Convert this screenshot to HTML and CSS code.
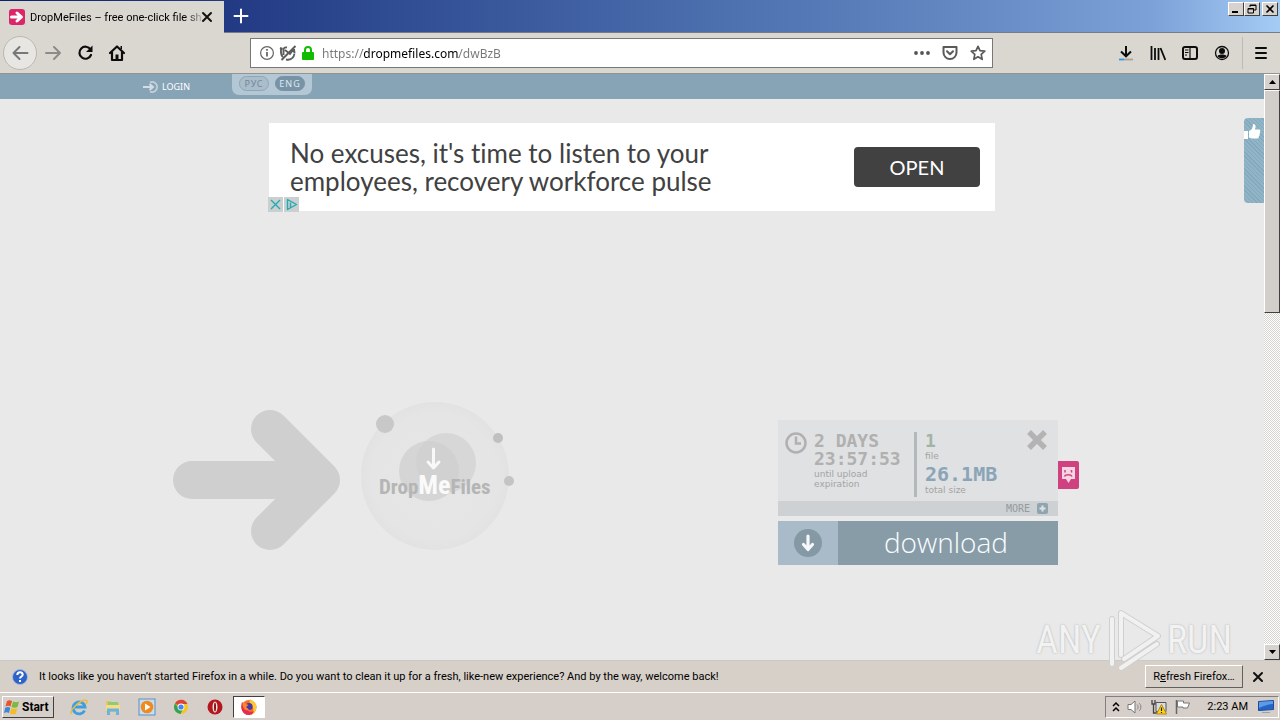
FILE: index.html
```html
<!DOCTYPE html>
<html lang="en">
<head>
<meta charset="utf-8">
<title>DropMeFiles – free one-click file sharing</title>
<link rel="stylesheet" href="styles.css">
</head>
<body>
<div class="screen">
  <header class="titlebar">
    <div class="tab">
      <svg class="favicon" width="16" height="16" viewBox="0 0 16 16"><rect width="16" height="16" rx="3" fill="#dc2468"/><path d="M2.500 8h9M8 4l4.500 4L8 12" fill="none" stroke="#fff" stroke-width="3" stroke-linecap="round" stroke-linejoin="round"/></svg>
      <span class="tab-title">DropMeFiles – free one-click file sh</span>
      <button class="icon-btn tab-close" aria-label="Close tab"><svg width="12" height="12" viewBox="0 0 12 12"><path d="M2 2l8 8M10 2l-8 8" stroke="#111" stroke-width="2" stroke-linecap="round"/></svg></button>
    </div>
    <button class="icon-btn new-tab" aria-label="New tab"><svg width="16" height="16" viewBox="0 0 16 16"><path d="M8 1.500v13M1.500 8h13" stroke="#fff" stroke-width="2" stroke-linecap="round"/></svg></button>
    <div class="window-controls">
      <button class="win-btn" aria-label="Minimize"><svg width="12" height="10" viewBox="0 0 12 10"><path d="M2 8h6" stroke="#000" stroke-width="2"/></svg></button>
      <button class="win-btn" aria-label="Restore"><svg width="12" height="10" viewBox="0 0 12 10"><path d="M4 3V1h6v5H8M4 1.500h6" fill="none" stroke="#000"/><path d="M2 4.500h5.500V9H2zM2 5h6" fill="none" stroke="#000"/></svg></button>
      <button class="win-btn win-close" aria-label="Close"><svg width="12" height="10" viewBox="0 0 12 10"><path d="M2.500 1.500l7 7M9.500 1.500l-7 7" stroke="#000" stroke-width="1.600"/></svg></button>
    </div>
  </header>

  <nav class="toolbar">
    <div class="nav-buttons">
      <button class="icon-btn back" aria-label="Back"><svg width="18" height="18" viewBox="0 0 18 18"><path d="M16.500 9H2.500M8.500 3L2.500 9l6 6" fill="none" stroke="#777" stroke-width="2" stroke-linecap="round" stroke-linejoin="round"/></svg></button>
      <button class="icon-btn" aria-label="Forward"><svg width="18" height="18" viewBox="0 0 18 18"><path d="M2 9h14M10 3l6 6-6 6" fill="none" stroke="#8d8b87" stroke-width="2" stroke-linecap="round" stroke-linejoin="round"/></svg></button>
      <button class="icon-btn" aria-label="Reload"><svg width="18" height="18" viewBox="0 0 18 18"><path d="M14.500 5.500A6 6 0 1 0 15 11" fill="none" stroke="#0c0c0d" stroke-width="2.200" stroke-linecap="round"/><path d="M16.500 1.500v6.500h-6.500z" fill="#0c0c0d"/></svg></button>
      <button class="icon-btn" aria-label="Home"><svg width="18" height="18" viewBox="0 0 18 18"><path d="M2 9l7-6.500L16 9M4 8v8h10V8" fill="none" stroke="#0c0c0d" stroke-width="2.200" stroke-linejoin="round" stroke-linecap="round"/><path d="M7.500 10.500h3V16h-3z" fill="#0c0c0d"/><path d="M12.500 2h1.500v3h-1.500z" fill="#0c0c0d"/></svg></button>
    </div>
    <div class="urlbar">
      <svg width="16" height="16" viewBox="0 0 16 16"><circle cx="8" cy="8" r="6.400" fill="none" stroke="#666" stroke-width="1.200"/><path d="M8 7v4.500M8 4v1.700" stroke="#555" stroke-width="1.600"/></svg>
      <svg width="18" height="16" viewBox="0 0 18 16"><path d="M2 4v4a6 6 0 0 0 2 4M7 14.500c5 1 8-2 8.500-6M15 4l.5 4M1 3l2.500 1M8 2.500C6 2 4.500 3 4.500 5v5M6 5l5 4 3-4" fill="none" stroke="#5c5c5c" stroke-width="1.900"/><path d="M16.500 1L2.500 15" stroke="#5c5c5c" stroke-width="1.900"/></svg>
      <svg width="14" height="16" viewBox="0 0 14 16"><path d="M4 8V5a3 3 0 0 1 6 0v3" fill="none" stroke="#12bc00" stroke-width="2"/><rect x="1" y="7" width="12" height="8" rx="1" fill="#12bc00"/></svg>
      <input class="url-input" type="text" aria-label="Address" value="https://dropmefiles.com/dwBzB">
      <button class="icon-btn" aria-label="Page actions"><svg width="16" height="16" viewBox="0 0 16 16"><g fill="#555"><circle cx="2" cy="8" r="1.900"/><circle cx="8" cy="8" r="1.900"/><circle cx="14" cy="8" r="1.900"/></g></svg></button>
      <button class="icon-btn" aria-label="Save to Pocket"><svg width="16" height="16" viewBox="0 0 16 16"><path d="M1.500 2h13v5.500a6.500 6.500 0 0 1-13 0zM5 6.200l3 3 3-3" fill="none" stroke="#5a5a5a" stroke-width="2" stroke-linejoin="round" stroke-linecap="round"/></svg></button>
      <button class="icon-btn" aria-label="Bookmark"><svg width="16" height="16" viewBox="0 0 16 16"><path d="M8 1.300l2 4.400 4.800.5-3.600 3.200 1 4.900L8 11.800l-4.200 2.500 1-4.900L1.200 6.200 6 5.700z" fill="none" stroke="#5a5a5a" stroke-width="1.700" stroke-linejoin="round"/></svg></button>
    </div>
    <div class="tool-buttons">
      <button class="icon-btn" aria-label="Downloads"><svg width="16" height="16" viewBox="0 0 16 16"><path d="M8 1v10M3 6.500L8 11.300l5-4.800" fill="none" stroke="#0c0c0d" stroke-width="2"/><path d="M1 14.500h5" stroke="#2b9be8" stroke-width="1.800"/><path d="M6 14.500h9" stroke="#a9a39c" stroke-width="1.800"/></svg></button>
      <button class="icon-btn" aria-label="Library"><svg width="16" height="16" viewBox="0 0 16 16"><path d="M1.500 1v14M5 3v12M8.500 3v12M10.500 3l4.800 12" stroke="#0c0c0d" stroke-width="1.800"/></svg></button>
      <button class="icon-btn" aria-label="Sidebars"><svg width="16" height="16" viewBox="0 0 16 16"><rect x="1" y="2" width="14" height="12" rx="2" fill="none" stroke="#0c0c0d" stroke-width="2"/><path d="M8 2v12M3 5h3.500M3 7.500h3.500M3 10h2" stroke="#0c0c0d" stroke-width="1.200"/></svg></button>
      <button class="icon-btn" aria-label="Account"><svg width="16" height="16" viewBox="0 0 16 16"><circle cx="8" cy="8" r="6.500" fill="none" stroke="#0c0c0d" stroke-width="1.300"/><circle cx="8" cy="6" r="3" fill="#0c0c0d"/><path d="M3.500 11c1-2 8-2 9 0-1.500 3-7.500 3-9 0z" fill="#0c0c0d"/></svg></button>
      <button class="icon-btn menu" aria-label="Menu"><svg width="16" height="16" viewBox="0 0 16 16"><path d="M3 3h10M3 8h10M3 13h10" stroke="#0c0c0d" stroke-width="2" stroke-linecap="round"/></svg></button>
    </div>
  </nav>

  <div class="viewport">
    <main class="page">
      <div class="site-header">
        <div class="site-header-inner">
          <a class="login" href="#"><svg width="17" height="12" viewBox="0 0 17 12"><path d="M1 6h9M7.500 3l3.500 3-3.500 3" fill="none" stroke="#d3dde4" stroke-width="2"/><path d="M8 1.500a5 5 0 1 1 0 9" fill="none" stroke="#c3d1da" stroke-width="1.800"/></svg>LOGIN</a>
          <div class="langs"><button class="lang">РУС</button><button class="lang active">ENG</button></div>
        </div>
      </div>
      <section class="ad">
        <p class="ad-text">No excuses, it's time to listen to your<br>employees, recovery workforce pulse</p>
        <button class="ad-open">OPEN</button>
        <div class="ad-marks">
          <button class="ad-mark" aria-label="Close ad"><svg width="15" height="15" viewBox="0 0 15 15"><path d="M3 3l9 9M12 3l-9 9" stroke="#22acb4" stroke-width="1.400"/></svg></button>
          <button class="ad-mark" aria-label="AdChoices"><svg width="15" height="15" viewBox="0 0 15 15"><path d="M3.500 2.500v10L12.500 7.500z M6.500 5.500v5" fill="none" stroke="#22acb4" stroke-width="1.400" stroke-linejoin="round"/></svg></button>
        </div>
      </section>
      <section class="hero">
        <div class="brand">
          <svg width="168" height="140" viewBox="0 0 168 140"><path d="M19 70h125M97 19l51 51-51 51" fill="none" stroke="#cfcfcf" stroke-width="38" stroke-linecap="round" stroke-linejoin="round"/></svg>
          <div class="orb">
            <svg width="154" height="148" viewBox="0 0 154 148">
              <defs><radialGradient id="orb"><stop offset="0" stop-color="#e6e6e6"/><stop offset=".85" stop-color="#e5e5e5"/><stop offset="1" stop-color="#e2e2e2"/></radialGradient></defs>
              <circle cx="75" cy="74" r="74" fill="url(#orb)"/>
              <circle cx="86" cy="61" r="30" fill="#d7d7d7"/>
              <circle cx="69" cy="69" r="30" fill="#cfcfcf" fill-opacity=".72"/>
              <circle cx="25" cy="22" r="9" fill="#c8c8c8"/><circle cx="138" cy="36" r="5" fill="#c0c0c0"/><circle cx="149" cy="79" r="5" fill="#c4c4c4"/>
              <path d="M73.500 47v18M68 60l5.500 6 5.500-6" fill="none" stroke="#f8f8f8" stroke-width="3" stroke-linecap="round" stroke-linejoin="round"/>
            </svg>
            <div class="wordmark">Drop<span class="me">Me</span>Files</div>
          </div>
        </div>
        <div class="download-box">
          <div class="card">
            <div class="info">
              <svg class="clock" width="22" height="22" viewBox="0 0 22 22"><circle cx="11" cy="11" r="9.500" fill="none" stroke="#b0b0b0" stroke-width="2.500"/><path d="M11 4.500v7h5" fill="none" stroke="#b0b0b0" stroke-width="2.500"/></svg>
              <div class="expiry"><div class="digits">2 DAYS</div><div class="digits">23:57:53</div><div class="caption">until upload<br>expiration</div></div>
              <div class="totals"><div class="digits green">1</div><div class="caption">file</div><div class="digits blue">26.1MB</div><div class="caption">total size</div></div>
              <button class="icon-btn dismiss" aria-label="Close"><svg width="22" height="22" viewBox="0 0 22 22"><path d="M3 3l16 16M19 3L3 19" stroke="#b3b3b3" stroke-width="5.500"/></svg></button>
            </div>
            <button class="more">MORE <svg width="11" height="11" viewBox="0 0 11 11"><rect width="11" height="11" rx="2" fill="#90a4b0"/><path d="M5.500 2.500v6M2.500 5.500h6" stroke="#dce3e7" stroke-width="2"/></svg></button>
            <button class="report" aria-label="Report file"><svg width="21" height="28" viewBox="0 0 21 28"><path d="M4 6h13v12h-4l-2.500 4L8 18H4z" fill="#f6d6e4"/><path d="M7 9v2.500M13.500 9v2.500M6.500 15.500c1-2.500 6.500-2.500 7.500 0" fill="none" stroke="#d0427f" stroke-width="1.500"/></svg></button>
          </div>
          <button class="download"><span class="download-icon"><svg width="28" height="28" viewBox="0 0 28 28"><circle cx="14" cy="14" r="14" fill="#8499a4"/><path d="M14 7v13M9.500 15.500L14 20.500l4.500-5" fill="none" stroke="#f4f8fa" stroke-width="3.200" stroke-linecap="round" stroke-linejoin="round"/></svg></span><span class="download-label">download</span></button>
        </div>
      </section>
      <button class="like" aria-label="Like"><svg width="18" height="17" viewBox="0 0 18 17"><path d="M0 8h4v8H0zM5 8c3-1 4-4 4-7 3 0 3 3 2 5.500h4.500c1 0 1.200 2 .2 2.300.8.600.5 2-.3 2.200.6.700.2 2-.6 2.200.3 1-.3 2.300-1.300 2.300H8l-3-1z" fill="#fff"/></svg></button>
    </main>
    <div class="scrollbar">
      <button class="win-btn scroll-arrow" aria-label="Scroll up"><svg width="7" height="4" viewBox="0 0 7 4"><path d="M0 4L3.500 0 7 4z"/></svg></button>
      <div class="thumb"></div>
      <div class="track"></div>
      <button class="win-btn scroll-arrow" aria-label="Scroll down"><svg width="7" height="4" viewBox="0 0 7 4"><path d="M0 0l3.500 4L7 0z"/></svg></button>
    </div>
    <div class="watermark"><span>ANY</span><svg width="60" height="66" viewBox="0 0 60 66"><path d="M17 48V6L54 29 20 52M8 57V12M17 61L53 37" fill="none" stroke="#d0d0d0" stroke-width="6" stroke-linejoin="round" stroke-linecap="round"/><path d="M17 48V6L54 29 20 52M8 57V12M17 61L53 37" fill="none" stroke="#f1f1f1" stroke-width="4" stroke-linejoin="round" stroke-linecap="round"/></svg><span>RUN</span></div>
  </div>

  <div class="notice">
    <svg width="16" height="16" viewBox="0 0 16 16"><circle cx="8" cy="8" r="7.500" fill="#2d62c9" stroke="#a4b7dd"/><path d="M5.300 6c0-3.500 5.600-3.500 5.400-.3C10.700 7.500 8 7.500 8 9.500M8 11v2" fill="none" stroke="#fff" stroke-width="2"/></svg>
    <span class="notice-text">It looks like you haven’t started Firefox in a while. Do you want to clean it up for a fresh, like-new experience? And by the way, welcome back!</span>
    <button class="refresh">R<u>e</u>fresh Firefox…</button>
    <button class="icon-btn" aria-label="Dismiss"><svg width="12" height="12" viewBox="0 0 12 12"><path d="M2 2l8 8M10 2l-8 8" stroke="#111" stroke-width="2" stroke-linecap="round"/></svg></button>
  </div>

  <footer class="taskbar">
    <button class="start"><svg width="16" height="16" viewBox="0 0 16 16"><path d="M3 2c2-1 3-1 5 0L6.500 7.500C5 6.500 3.500 6.500 1.500 7.500z" fill="#e6562a"/><path d="M9 2.500c2 1 4 1 6 0L13.500 8c-2 1-4 1-6 0z" fill="#7cb93c"/><path d="M1.200 8.700c2-1 3.500-1 5 0L5 14c-1.500-1-3-1-5 0z" fill="#3c87d8"/><path d="M7.200 9.200c2 1 4 1 6 0L12 14.500c-2 1-4 1-6.200 0z" fill="#f6bd22"/></svg>Start</button>
    <div class="launchers">
      <button class="launcher" aria-label="Internet Explorer"><svg width="18" height="18" viewBox="0 0 18 18"><path d="M14.500 12.500A6 6 0 1 1 15 9H5" fill="none" stroke="#3b9fe0" stroke-width="2.800"/><path d="M1.500 16C-1 12 11 1 16.500 2.500c1 .500.500 2-.5 3.500" fill="none" stroke="#e9bb3c" stroke-width="1.500"/></svg></button>
      <button class="launcher" aria-label="Explorer"><svg width="18" height="18" viewBox="0 0 18 18"><path d="M2 3h5l1 2h7v9H2z" fill="#e6c55d"/><path d="M4 4h10v6H4z" fill="#8fcb74"/><path d="M2 7h14v6H2z" fill="#f5dc86"/><path d="M3 17v-6.500h12V17h-3v-3.500H6V17z" fill="#6db3e2"/></svg></button>
      <button class="launcher" aria-label="Media Player"><svg width="18" height="18" viewBox="0 0 18 18"><rect x="1" y="1" width="16" height="16" fill="#c6ddf0" stroke="#5a8fc4"/><circle cx="9" cy="9" r="6.300" fill="#f08a1d"/><path d="M7 5.500v7L12.500 9z" fill="#fff"/></svg></button>
      <button class="launcher" aria-label="Chrome"><svg width="18" height="18" viewBox="0 0 18 18"><circle cx="9" cy="9" r="7" fill="#f5c52c"/><path d="M9 9L3 5.400A7 7 0 0 1 15.500 6H9z" fill="#dc4437"/><path d="M3 5.400A7 7 0 0 0 8.500 16L11 11 7 10z" fill="#32a457"/><circle cx="9" cy="9" r="3.400" fill="#fff"/><circle cx="9" cy="9" r="2.600" fill="#4285f4"/></svg></button>
      <button class="launcher" aria-label="Opera"><svg width="18" height="18" viewBox="0 0 18 18"><circle cx="9" cy="9" r="7.500" fill="#b5161d"/><ellipse cx="9" cy="9" rx="2.500" ry="5.500" fill="#f5e4e2"/><ellipse cx="9" cy="9" rx="1" ry="4.500" fill="#8e1015"/></svg></button>
      <button class="launcher pressed" aria-label="Firefox"><svg width="18" height="18" viewBox="0 0 18 18"><circle cx="9" cy="9.500" r="7.500" fill="#f4702a"/><path d="M10 1c4 2 7 5 6.300 9A7.500 7.500 0 0 1 9 17c4-2 6-6 3-9-2-2-3-4-2-7z" fill="#ffca32"/><path d="M2 4c-2 6 0 12 6 13 3 0 5-1 6-4-3 2-8 0-8-4z" fill="#e62a52"/><circle cx="9" cy="8.500" r="3.600" fill="#4b35a8"/><path d="M2.500 4L5 5.500 8.500 7 6 9l3 2.500C5 14 2 9 2.500 4z" fill="#f7892c"/></svg></button>
    </div>
    <div class="tray">
      <svg width="8" height="12" viewBox="0 0 8 12"><path d="M1 5l3-3 3 3M1 10l3-3 3 3" fill="none" stroke="#000" stroke-width="1.500"/></svg>
      <svg width="18" height="16" viewBox="0 0 18 16"><path d="M2 5.500h3L9 2v12l-4-3.500H2z" fill="#fff" stroke="#777"/><path d="M11 5.500c1.500 1.500 1.500 3.500 0 5M13 4c2.500 2 2.500 6 0 8" fill="none" stroke="#888"/></svg>
      <svg width="18" height="16" viewBox="0 0 18 16"><path d="M6 3.500h10v9H6z" fill="#d7dde4" stroke="#555"/><path d="M2 1v4h3V1M3.500 5v9h4" fill="none" stroke="#444" stroke-width="1.300"/><path d="M11.500 5.500L16.500 15h-10z" fill="#ffd21e" stroke="#b58a00"/><path d="M11.500 8.500v3.500M11.500 13v1" stroke="#222" stroke-width="1.200"/></svg>
      <svg width="18" height="16" viewBox="0 0 18 16"><path d="M2.500 1v14" stroke="#666" stroke-width="1.500"/><path d="M3.500 2h6v2h6l-2 5H9V8H3.500z" fill="#fff" stroke="#777"/></svg>
      <time class="time">2:23 AM</time>
      <svg width="16" height="14" viewBox="0 0 16 14"><path d="M.5 1.500l15-1v9l-15 1z" fill="#2464c6" stroke="#1d4c99"/><path d="M1 2l14-1v3c-5 0-9 2-14 4z" fill="#5d9bea"/><path d="M4 12.500h8" stroke="#8fa4bd"/></svg>
    </div>
  </footer>
</div>
</body>
</html>
```
FILE: styles.css
```css
* { box-sizing: border-box; }
body { margin: 0; font-family: Roboto, "Noto Sans", sans-serif; font-size: 11px; color: #000; }
button { font: inherit; color: inherit; border: 0; padding: 0; margin: 0; background: none; }
svg { display: block; flex: none; }
.screen { display: flex; flex-direction: column; height: 100vh; overflow: hidden; background: #d5cec8; }
.icon-btn { display: flex; align-items: center; justify-content: center; }

.titlebar { display: flex; height: 33px; flex: none; background: linear-gradient(90deg, #0a246a 0, #243d86 20%, #4567a8 50%, #5f84be 72%, #7ba1d8 90%, #a4ccf4 100%); border-bottom: 1px solid #777c88; }
.tab { display: flex; align-items: center; gap: 5px; width: 224px; height: 32px; margin-top: 1px; padding: 0 11px 0 9px; background: #dad7d1; }
.tab-title { flex: 1; white-space: nowrap; mask-image: linear-gradient(90deg, #000 90%, transparent 102%); }
.tab-close { margin-left: -6px; }
.new-tab { width: 33px; }
.window-controls { display: flex; align-items: flex-start; margin-left: auto; padding: 2px 2px 0 0; }
.win-btn { display: flex; align-items: center; justify-content: center; width: 16px; height: 14px; background: #d6d3ce; border: 1px solid; border-color: #fff #404040 #404040 #fff; }
.win-close { margin-left: 2px; }

.toolbar { display: flex; align-items: center; height: 41px; flex: none; background: #dad7d1; border-bottom: 1px solid #969490; padding: 0 11px 0 3px; }
.nav-buttons { display: flex; align-items: center; gap: 14px; width: 247px; }
.back { width: 34px; height: 34px; margin-right: -7px; border: 1px solid #bbb8b2; border-radius: 50%; background: #e8e6e2; }
.urlbar { display: flex; align-items: center; gap: 4px; flex: 1; max-width: 743px; height: 30px; padding: 0 6px 0 8px; border: 1px solid #777; background: #fff; }
.urlbar .icon-btn { margin-left: 8px; }
.url-input { flex: 1; min-width: 0; height: 26px; border: 0; padding: 0 0 0 3px; outline: 0; font: 12px "Noto Sans", sans-serif; color: transparent; background: linear-gradient(90deg, #777 44px, #000 44px, #000 140px, #777 140px); background-clip: text; }
.tool-buttons { display: flex; align-items: center; gap: 16px; margin-left: auto; }
.menu { height: 32px; padding-left: 10px; margin-left: -4px; border-left: 1px solid #bdbab5; }

.viewport { position: relative; display: flex; flex: 1; min-height: 0; background: #e9e9e9; }
.page { position: relative; flex: 1; min-width: 0; overflow: hidden; }
.site-header { height: 25px; background: #87a3b6; }
.site-header-inner { display: flex; width: 980px; max-width: 100%; margin: 0 auto; }
.login { display: flex; align-items: center; gap: 3px; width: 90px; height: 25px; color: #fff; font: 9px "Noto Sans", sans-serif; text-decoration: none; }
.langs { display: flex; gap: 6px; height: 21px; padding: 2px 7px 5px; background: #b4c7d4; border-radius: 0 0 7px 7px; }
.lang { display: flex; align-items: center; justify-content: center; width: 30px; height: 15px; border-radius: 8px; border: 1px solid #8fa6b6; background: #a9bdca; color: #70889a; font: 9px "Noto Sans", sans-serif; letter-spacing: 1px; }
.lang.active { background: #7893a6; border-color: #7893a6; color: #dce8ef; }

.ad { position: relative; display: flex; align-items: center; justify-content: space-between; width: 726px; max-width: 100%; height: 88px; margin: 24px auto 0; padding: 0 15px 0 21px; background: #fff; }
.ad-text { margin: 0; font: 26px/28px Lato, sans-serif; font-variant-ligatures: none; color: #414141; }
.ad-open { width: 126px; height: 40px; border-radius: 4px; background: #414141; color: #fff; font: 20px Lato, sans-serif; }
.ad-marks { position: absolute; left: -1px; bottom: -1px; display: flex; gap: 1px; background: #fff; }
.ad-mark { width: 15px; height: 15px; background: #cbcfcf; }

.hero { display: flex; justify-content: space-between; align-items: flex-start; width: 918px; max-width: 100%; margin: 191px auto 0; padding-right: 33px; }
.brand { display: flex; align-items: flex-end; gap: 19px; }
.orb { position: relative; }
.wordmark { position: absolute; left: 19px; top: 67px; font: bold 21px/32px "Roboto Condensed", "Liberation Sans", sans-serif; color: #b5b5b5; white-space: nowrap; }
.me { color: #fafafa; font-size: 26px; }
.download-box { width: 280px; margin-top: 18px; }
.card { position: relative; background: #dfe1e2; }
.info { display: flex; height: 81px; padding: 12px 10px 4px 7px; }
.clock { margin-right: 7px; }
.expiry { width: 100px; color: #b0b0b0; }
.totals { flex: 1; padding-left: 8px; border-left: 3px solid #b3b8bb; }
.digits { font: bold 18px/18px "DejaVu Sans Mono", monospace; }
.caption { font: 9px/10px "DejaVu Sans", sans-serif; color: #a4a4a4; padding-top: 1px; }
.green { color: #a3b3a6; }
.blue { color: #8aa5b7; padding-top: 3px; font-size: 20px; line-height: 20px; height: 23px; }
.dismiss { width: 22px; height: 16px; }
.more { display: flex; align-items: center; justify-content: flex-end; gap: 7px; width: 100%; height: 15px; padding-right: 10px; background: #cdd1d3; color: #949a9e; font: 10px "DejaVu Sans Mono", monospace; }
.report { position: absolute; left: 100%; top: 41px; width: 21px; height: 28px; background: #d0427f; border-radius: 0 2px 2px 0; }
.download { display: flex; width: 100%; height: 44px; margin-top: 5px; background: #889ca8; color: #fafdff; }
.download-icon { display: flex; align-items: center; justify-content: center; width: 60px; height: 44px; background: #a9bbc8; }
.download-label { flex: 1; padding-right: 4px; font: 300 28px/42px "Open Sans", sans-serif; }
.like { position: absolute; right: 0; top: 44px; width: 20px; height: 85px; padding-top: 5px; border-radius: 4px 0 0 4px; background: repeating-linear-gradient(45deg, #83a9bc 0 1px, #91b5c6 1px 3px); display: flex; align-items: flex-start; }

.scrollbar { display: flex; flex-direction: column; width: 16px; flex: none; background: #e7e4e0; }
.scroll-arrow { width: 16px; height: 16px; }
.thumb { flex: 0 0 38%; border: 1px solid; border-color: #fff #404040 #404040 #fff; background: #d2cfca; }
.track { flex: 1; background: repeating-conic-gradient(#d6d3ce 0 25%, #fff 0 50%) 0 0 / 2px 2px; }
.watermark { position: absolute; right: 48px; bottom: -13px; z-index: 2; display: flex; align-items: center; gap: 3px; height: 66px; font: 38px "Roboto Condensed", "Liberation Sans", sans-serif; color: #f2f2f2; text-shadow: 0 0 2px #aaa; }

.notice { display: flex; align-items: center; height: 33px; flex: none; padding: 0 16px 0 12px; border-top: 1px solid #ccc9c4; border-bottom: 1px solid #fff; background: #d6d0c9; }
.notice-text { flex: 1; margin-left: 11px; white-space: nowrap; }
.refresh { width: 98px; height: 23px; margin-right: 9px; border: 1px solid; border-color: #fff #606060 #606060 #fff; }
.taskbar { display: flex; align-items: center; height: 27px; flex: none; padding: 0 1px 0 2px; background: #d6cec8; }
.start { display: flex; align-items: center; gap: 2px; width: 52px; height: 22px; padding-left: 1px; border: 1px solid; border-color: #fff #404040 #404040 #fff; font-weight: bold; font-size: 12px; }
.launchers { display: flex; gap: 2px; margin-left: 9px; }
.launcher { display: flex; align-items: center; justify-content: center; width: 32px; height: 22px; }
.pressed { background: #fff; border: 1px solid; border-color: #404040 #fff #fff #404040; }
.tray { display: flex; align-items: center; gap: 6px; height: 22px; margin-left: auto; padding: 0 4px 0 6px; border: 1px solid; border-color: #808080 #fff #fff #808080; }
.time { margin: 0 4px 0 9px; }
```
